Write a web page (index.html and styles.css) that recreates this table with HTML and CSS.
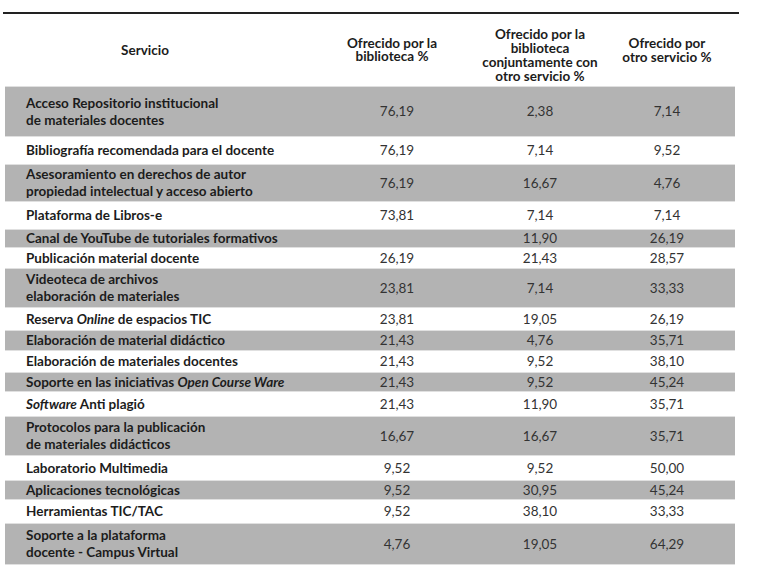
FILE: index.html
```html
<!DOCTYPE html>
<html lang="es">
<head>
<meta charset="utf-8">
<title>Servicios</title>
<link rel="stylesheet" href="styles.css">
</head>
<body>
<div class="page">
  <div class="rule"></div>
  <table class="data">
    <colgroup>
      <col class="w1">
      <col class="w2">
      <col class="w3">
      <col class="w4">
    </colgroup>
    <thead>
      <tr class="head">
        <th class="c1">Servicio</th>
        <th class="c2">Ofrecido por la<br>biblioteca %</th>
        <th class="c3 low">Ofrecido por la<br>biblioteca<br>conjuntamente con<br>otro servicio %</th>
        <th class="c4">Ofrecido por<br>otro servicio %</th>
      </tr>
    </thead>
    <tbody>
      <tr class="h50"><td class="c1">Acceso Repositorio institucional<br>de materiales docentes</td><td class="c2">76,19</td><td class="c3">2,38</td><td class="c4">7,14</td></tr>
      <tr class="h28"><td class="c1">Bibliografía recomendada para el docente</td><td class="c2">76,19</td><td class="c3">7,14</td><td class="c4">9,52</td></tr>
      <tr class="h37"><td class="c1">Asesoramiento en derechos de autor<br>propiedad intelectual y acceso abierto</td><td class="c2">76,19</td><td class="c3">16,67</td><td class="c4">4,76</td></tr>
      <tr class="h28"><td class="c1">Plataforma de Libros-e</td><td class="c2">73,81</td><td class="c3">7,14</td><td class="c4">7,14</td></tr>
      <tr class="h18"><td class="c1">Canal de YouTube de tutoriales formativos</td><td class="c2"></td><td class="c3">11,90</td><td class="c4">26,19</td></tr>
      <tr class="h21"><td class="c1">Publicación material docente</td><td class="c2">26,19</td><td class="c3">21,43</td><td class="c4">28,57</td></tr>
      <tr class="h39"><td class="c1">Videoteca de archivos<br>elaboración de materiales</td><td class="c2">23,81</td><td class="c3">7,14</td><td class="c4">33,33</td></tr>
      <tr class="h23"><td class="c1">Reserva <em>Online</em> de espacios TIC</td><td class="c2">23,81</td><td class="c3">19,05</td><td class="c4">26,19</td></tr>
      <tr class="h20"><td class="c1">Elaboración de material didáctico</td><td class="c2">21,43</td><td class="c3">4,76</td><td class="c4">35,71</td></tr>
      <tr class="h22"><td class="c1">Elaboración de materiales docentes</td><td class="c2">21,43</td><td class="c3">9,52</td><td class="c4">38,10</td></tr>
      <tr class="h19"><td class="c1">Soporte en las iniciativas <em>Open Course Ware</em></td><td class="c2">21,43</td><td class="c3">9,52</td><td class="c4">45,24</td></tr>
      <tr class="h25"><td class="c1"><em>Software</em> Anti plagió</td><td class="c2">21,43</td><td class="c3">11,90</td><td class="c4">35,71</td></tr>
      <tr class="h39"><td class="c1">Protocolos para la publicación<br>de materiales didácticos</td><td class="c2">16,67</td><td class="c3">16,67</td><td class="c4">35,71</td></tr>
      <tr class="h25"><td class="c1">Laboratorio Multimedia</td><td class="c2">9,52</td><td class="c3">9,52</td><td class="c4">50,00</td></tr>
      <tr class="h19"><td class="c1">Aplicaciones tecnológicas</td><td class="c2">9,52</td><td class="c3">30,95</td><td class="c4">45,24</td></tr>
      <tr class="h24"><td class="c1">Herramientas TIC/TAC</td><td class="c2">9,52</td><td class="c3">38,10</td><td class="c4">33,33</td></tr>
      <tr class="h41"><td class="c1">Soporte a la plataforma<br>docente - Campus Virtual</td><td class="c2">4,76</td><td class="c3">19,05</td><td class="c4">64,29</td></tr>
    </tbody>
  </table>
</div>
</body>
</html>
```

FILE: styles.css
```css
html, body {
  margin: 0;
  padding: 0;
  background: #ffffff;
}

body {
  font-family: Lato, "Liberation Sans", sans-serif;
  font-size: 13.5px;
  color: #1c1c1c;
}

.page {
  padding: 12px 0 0 3px;
}

.rule {
  width: 736px;
  border-top: 2px solid #222222;
}

.data {
  margin-left: 2px;
  width: 730px;
  border-collapse: separate;
  border-spacing: 0;
  table-layout: fixed;
}

.w1 { width: 323px; }
.w2 { width: 138px; }
.w3 { width: 148px; }
.w4 { width: 121px; }

.data th,
.data td {
  box-sizing: border-box;
  padding: 0;
  vertical-align: middle;
  border-bottom: 1px solid #e0e0e0;
}

.data th {
  font-weight: 700;
  line-height: 14px;
  text-align: center;
  color: #1c1c1c;
}

.head {
  height: 73px;
}

.data th.c1 {
  padding: 0 64px 0 21px;
}

.data th.c2 {
  padding-right: 10px;
  line-height: 13px;
}

.data th.low {
  padding-top: 9px;
}

.data .c4 {
  padding-right: 15px;
}

.data td {
  line-height: 17px;
  text-align: center;
  color: #333333;
}

.data td.c1 {
  text-align: left;
  padding-left: 21px;
  font-weight: 700;
  color: #1c1c1c;
}

.data em {
  font-style: italic;
}

.data tbody tr:nth-child(odd) td {
  background: #b3b3b3;
}

.h18 { height: 18px; }
.h19 { height: 19px; }
.h20 { height: 20px; }
.h21 { height: 21px; }
.h22 { height: 22px; }
.h23 { height: 23px; }
.h24 { height: 24px; }
.h25 { height: 25px; }
.h28 { height: 28px; }
.h37 { height: 37px; }
.h39 { height: 39px; }
.h41 { height: 41px; }
.h50 { height: 50px; }
```
